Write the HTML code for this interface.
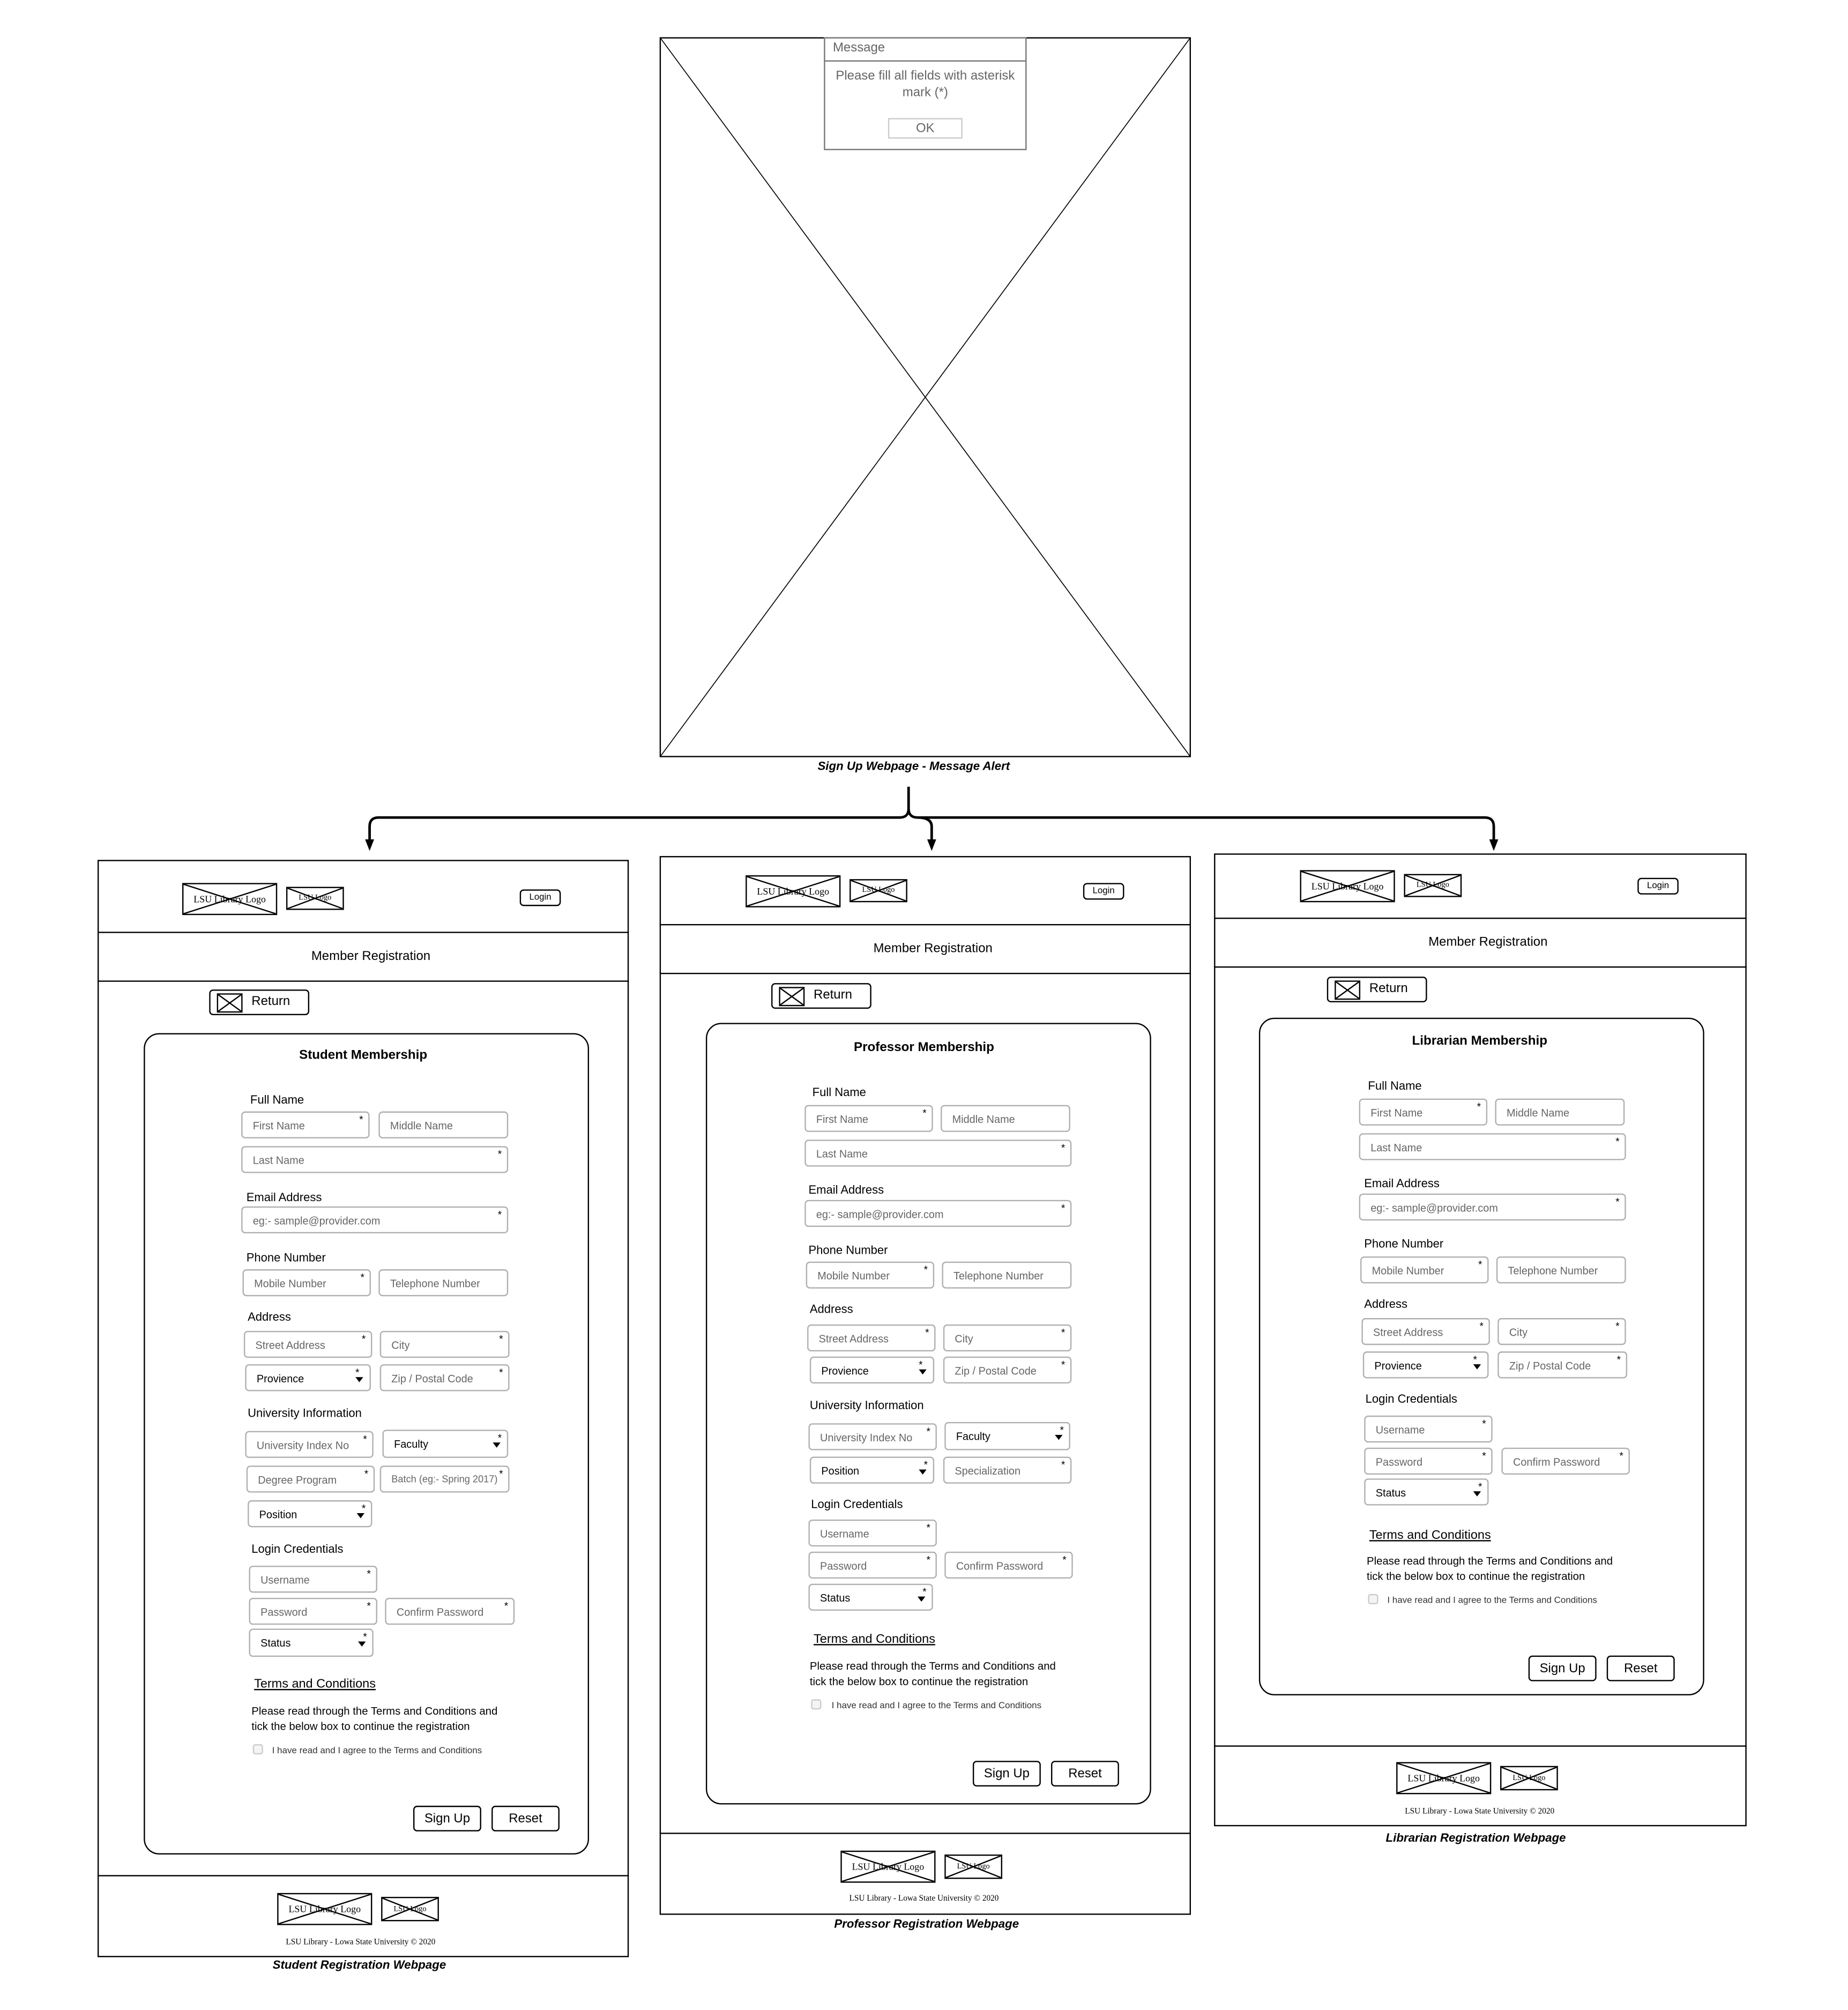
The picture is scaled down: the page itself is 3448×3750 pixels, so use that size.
<!DOCTYPE html>
<html><head><meta charset="utf-8"><style>
html,body{margin:0;padding:0;background:#fff;}
body{width:3448px;height:3750px;overflow:hidden;position:relative;}
#w{position:absolute;left:0;top:0;width:1440px;height:1566px;transform:scale(2.3944);transform-origin:0 0;font-family:"Liberation Sans",sans-serif;}
#w div{position:absolute;box-sizing:border-box;}
.bx{border:1px solid #000;}
.f{border:1px solid #b0b0b0;border-radius:3px;font-size:8.3px;color:#666;padding-left:8px;display:flex;align-items:center;white-space:nowrap;}
.f i{position:absolute;right:4px;top:1px;font-style:normal;color:#000;font-size:8px;}
.sel{color:#000;}
.sel b{position:absolute;right:5px;top:9px;width:0;height:0;border-left:3.5px solid transparent;border-right:3.5px solid transparent;border-top:4px solid #000;}
.lb{font-size:9.2px;color:#000;white-space:nowrap;}
.tt{font-size:10.1px;font-weight:bold;white-space:nowrap;transform:translateX(-50%);}
.cap{font-size:9.3px;font-weight:bold;font-style:italic;white-space:nowrap;transform:translateX(-50%);}
.btn{border:1px solid #000;border-radius:3px;font-size:10px;display:flex;align-items:center;justify-content:center;}
.lg{border:1px solid #000;}
.lg svg{position:absolute;left:0;top:0;width:100%;height:100%;}
.lg span{position:absolute;left:0;right:0;top:0;bottom:0;display:flex;align-items:center;justify-content:center;font-family:"Liberation Serif",serif;font-size:7.5px;white-space:nowrap;}
.lg.s span{font-size:6px;}
.lo{border:1px solid #000;border-radius:3px;font-size:7px;display:flex;align-items:center;justify-content:center;}
.nav{font-size:10px;display:flex;align-items:center;justify-content:center;border-bottom:1px solid #000;border-top:1px solid #000;padding-left:12px;}
.ret{border:1px solid #000;border-radius:3px;font-size:10px;}
.ret .ic{left:5px;top:2px;width:20px;height:15px;border:1px solid #000;}
.ret span{position:absolute;left:32px;top:3px;}
.card{border:1px solid #000;border-radius:12px;}
.ft{font-size:6.4px;white-space:nowrap;transform:translateX(-50%);font-family:"Liberation Serif",serif;}
.tc{font-size:9.8px;text-decoration:underline;white-space:nowrap;}
.p{font-size:8.5px;line-height:12px;white-space:nowrap;}
.cb{width:8px;height:8px;border:1px solid #ccc;border-radius:2px;background:#f4f4f4;}
.ct{font-size:7.1px;color:#333;white-space:nowrap;}
</style></head><body><div id="w">

<svg style="position:absolute;left:0;top:0" width="1440" height="1566">
<g stroke="#000" fill="none">
<rect x="514.5" y="29.5" width="413" height="560" stroke-width="1"/>
<path d="M514.5 29.5L927.5 589.5M927.5 29.5L514.5 589.5" stroke-width="0.7"/>
<path d="M708 613V630Q708 637 701 637H295Q288 637 288 644V658M708 630Q708 637 715 637H1157Q1164 637 1164 644V658M715 637Q726 637 726 644V658" stroke-width="2"/>
</g>
<g fill="#000"><path d="M284.5 654L288 663L291.5 654Z"/><path d="M722.5 654L726 663L729.5 654Z"/><path d="M1160.5 654L1164 663L1167.5 654Z"/></g>
</svg>

<div style="left:642px;top:29px;width:158px;height:88px;border:1px solid #777;background:#fff"></div>
<div style="left:642px;top:47px;width:158px;height:1px;background:#777"></div>
<div style="left:649px;top:32px;font-size:10px;color:#666">Message</div>
<div style="left:642px;top:53px;width:158px;text-align:center;font-size:10px;color:#666;line-height:13px">Please fill all fields with asterisk mark (*)</div>
<div style="left:692px;top:92px;width:58px;height:16px;border:1px solid #ccc;font-size:10px;color:#666;display:flex;align-items:center;justify-content:center">OK</div>
<div class="cap" style="left:712px;top:592px">Sign Up Webpage - Message Alert</div>

<!-- STUDENT -->
<div class="bx" style="left:76px;top:670px;width:414px;height:855px"></div>
<div class="lg" style="left:142px;top:688px;width:74px;height:25px"><svg viewBox="0 0 100 100" preserveAspectRatio="none"><path d="M0 0L100 100M100 0L0 100" stroke="#000" vector-effect="non-scaling-stroke"/></svg><span>LSU Library Logo</span></div>
<div class="lg s" style="left:223px;top:691px;width:45px;height:18px"><svg viewBox="0 0 100 100" preserveAspectRatio="none"><path d="M0 0L100 100M100 0L0 100" stroke="#000" vector-effect="non-scaling-stroke"/></svg><span>LSU Logo</span></div>
<div class="lo" style="left:405px;top:693px;width:32px;height:13px">Login</div>
<div class="nav" style="left:76px;top:726px;width:414px;height:39px">Member Registration</div>
<div class="ret" style="left:163px;top:771px;width:78px;height:20px"><div class="ic"><svg width="100%" height="100%" viewBox="0 0 100 100" preserveAspectRatio="none"><path d="M0 0L100 100M100 0L0 100" stroke="#000" vector-effect="non-scaling-stroke"/></svg></div><span>Return</span></div>
<div class="card" style="left:112px;top:805px;width:347px;height:640px"></div>
<div class="tt" style="left:283px;top:817px">Student Membership</div>
<div class="lb" style="left:195px;top:852px">Full Name</div>
<div class="f" style="left:188px;top:866px;width:100px;height:21px">First Name<i>*</i></div>
<div class="f" style="left:295px;top:866px;width:101px;height:21px">Middle Name</div>
<div class="f" style="left:188px;top:893px;width:208px;height:21px">Last Name<i>*</i></div>
<div class="lb" style="left:192px;top:928px">Email Address</div>
<div class="f" style="left:188px;top:940px;width:208px;height:21px">eg:- sample@provider.com<i>*</i></div>
<div class="lb" style="left:192px;top:975px">Phone Number</div>
<div class="f" style="left:189px;top:989px;width:100px;height:21px">Mobile Number<i>*</i></div>
<div class="f" style="left:295px;top:989px;width:101px;height:21px">Telephone Number</div>
<div class="lb" style="left:193px;top:1021px">Address</div>
<div class="f" style="left:190px;top:1037px;width:100px;height:21px">Street Address<i>*</i></div>
<div class="f" style="left:296px;top:1037px;width:101px;height:21px">City<i>*</i></div>
<div class="f sel" style="left:191px;top:1063px;width:98px;height:21px">Provience<i style="right:8px">*</i><b></b></div>
<div class="f" style="left:296px;top:1063px;width:101px;height:21px">Zip / Postal Code<i>*</i></div>
<div class="lb" style="left:193px;top:1096px">University Information</div>
<div class="f" style="left:191px;top:1115px;width:100px;height:21px">University Index No<i>*</i></div>
<div class="f sel" style="left:298px;top:1114px;width:98px;height:22px">Faculty<i>*</i><b></b></div>
<div class="f" style="left:192px;top:1142px;width:100px;height:21px">Degree Program<i>*</i></div>
<div class="f" style="left:296px;top:1142px;width:101px;height:21px;font-size:7.6px">Batch (eg:- Spring 2017)<i>*</i></div>
<div class="f sel" style="left:193px;top:1169px;width:97px;height:21px">Position<i>*</i><b></b></div>
<div class="lb" style="left:196px;top:1202px">Login Credentials</div>
<div class="f" style="left:194px;top:1220px;width:100px;height:21px">Username<i>*</i></div>
<div class="f" style="left:194px;top:1245px;width:100px;height:21px">Password<i>*</i></div>
<div class="f" style="left:300px;top:1245px;width:101px;height:21px">Confirm Password<i>*</i></div>
<div class="f sel" style="left:194px;top:1269px;width:97px;height:22px">Status<i>*</i><b></b></div>
<div class="tc" style="left:198px;top:1307px">Terms and Conditions</div>
<div class="p" style="left:196px;top:1327px">Please read through the Terms and Conditions and<br>tick the below box to continue the registration</div>
<div class="cb" style="left:197px;top:1359px"></div>
<div class="ct" style="left:212px;top:1360px">I have read and I agree to the Terms and Conditions</div>
<div class="btn" style="left:322px;top:1407px;width:53px;height:20px">Sign Up</div>
<div class="btn" style="left:383px;top:1407px;width:53px;height:20px">Reset</div>
<div style="left:76px;top:1461px;width:414px;height:1px;background:#000"></div>
<div class="lg" style="left:216px;top:1475px;width:74px;height:25px"><svg viewBox="0 0 100 100" preserveAspectRatio="none"><path d="M0 0L100 100M100 0L0 100" stroke="#000" vector-effect="non-scaling-stroke"/></svg><span>LSU Library Logo</span></div>
<div class="lg s" style="left:297px;top:1478px;width:45px;height:19px"><svg viewBox="0 0 100 100" preserveAspectRatio="none"><path d="M0 0L100 100M100 0L0 100" stroke="#000" vector-effect="non-scaling-stroke"/></svg><span>LSU Logo</span></div>
<div class="ft" style="left:281px;top:1510px">LSU Library - Lowa State University © 2020</div>
<div class="cap" style="left:280px;top:1526px">Student Registration Webpage</div>

<!-- PROFESSOR -->
<div class="bx" style="left:514px;top:667px;width:414px;height:825px"></div>
<div class="lg" style="left:581px;top:682px;width:74px;height:25px"><svg viewBox="0 0 100 100" preserveAspectRatio="none"><path d="M0 0L100 100M100 0L0 100" stroke="#000" vector-effect="non-scaling-stroke"/></svg><span>LSU Library Logo</span></div>
<div class="lg s" style="left:662px;top:685px;width:45px;height:18px"><svg viewBox="0 0 100 100" preserveAspectRatio="none"><path d="M0 0L100 100M100 0L0 100" stroke="#000" vector-effect="non-scaling-stroke"/></svg><span>LSU Logo</span></div>
<div class="lo" style="left:844px;top:688px;width:32px;height:13px">Login</div>
<div class="nav" style="left:514px;top:720px;width:414px;height:39px">Member Registration</div>
<div class="ret" style="left:601px;top:766px;width:78px;height:20px"><div class="ic"><svg width="100%" height="100%" viewBox="0 0 100 100" preserveAspectRatio="none"><path d="M0 0L100 100M100 0L0 100" stroke="#000" vector-effect="non-scaling-stroke"/></svg></div><span>Return</span></div>
<div class="card" style="left:550px;top:797px;width:347px;height:609px"></div>
<div class="tt" style="left:720px;top:811px">Professor Membership</div>
<div class="lb" style="left:633px;top:846px">Full Name</div>
<div class="f" style="left:627px;top:861px;width:100px;height:21px">First Name<i>*</i></div>
<div class="f" style="left:733px;top:861px;width:101px;height:21px">Middle Name</div>
<div class="f" style="left:627px;top:888px;width:208px;height:21px">Last Name<i>*</i></div>
<div class="lb" style="left:630px;top:922px">Email Address</div>
<div class="f" style="left:627px;top:935px;width:208px;height:21px">eg:- sample@provider.com<i>*</i></div>
<div class="lb" style="left:630px;top:969px">Phone Number</div>
<div class="f" style="left:628px;top:983px;width:100px;height:21px">Mobile Number<i>*</i></div>
<div class="f" style="left:734px;top:983px;width:101px;height:21px">Telephone Number</div>
<div class="lb" style="left:631px;top:1015px">Address</div>
<div class="f" style="left:629px;top:1032px;width:100px;height:21px">Street Address<i>*</i></div>
<div class="f" style="left:735px;top:1032px;width:100px;height:21px">City<i>*</i></div>
<div class="f sel" style="left:631px;top:1057px;width:97px;height:21px">Provience<i style="right:8px">*</i><b></b></div>
<div class="f" style="left:735px;top:1057px;width:100px;height:21px">Zip / Postal Code<i>*</i></div>
<div class="lb" style="left:631px;top:1090px">University Information</div>
<div class="f" style="left:630px;top:1109px;width:100px;height:21px">University Index No<i>*</i></div>
<div class="f sel" style="left:736px;top:1108px;width:98px;height:22px">Faculty<i>*</i><b></b></div>
<div class="f sel" style="left:631px;top:1135px;width:97px;height:21px">Position<i>*</i><b></b></div>
<div class="f" style="left:735px;top:1135px;width:100px;height:21px">Specialization<i>*</i></div>
<div class="lb" style="left:632px;top:1167px">Login Credentials</div>
<div class="f" style="left:630px;top:1184px;width:100px;height:21px">Username<i>*</i></div>
<div class="f" style="left:630px;top:1209px;width:100px;height:21px">Password<i>*</i></div>
<div class="f" style="left:736px;top:1209px;width:100px;height:21px">Confirm Password<i>*</i></div>
<div class="f sel" style="left:630px;top:1234px;width:97px;height:21px">Status<i>*</i><b></b></div>
<div class="tc" style="left:634px;top:1272px">Terms and Conditions</div>
<div class="p" style="left:631px;top:1292px">Please read through the Terms and Conditions and<br>tick the below box to continue the registration</div>
<div class="cb" style="left:632px;top:1324px"></div>
<div class="ct" style="left:648px;top:1325px">I have read and I agree to the Terms and Conditions</div>
<div class="btn" style="left:758px;top:1372px;width:53px;height:20px">Sign Up</div>
<div class="btn" style="left:819px;top:1372px;width:53px;height:20px">Reset</div>
<div style="left:514px;top:1428px;width:414px;height:1px;background:#000"></div>
<div class="lg" style="left:655px;top:1442px;width:74px;height:25px"><svg viewBox="0 0 100 100" preserveAspectRatio="none"><path d="M0 0L100 100M100 0L0 100" stroke="#000" vector-effect="non-scaling-stroke"/></svg><span>LSU Library Logo</span></div>
<div class="lg s" style="left:736px;top:1445px;width:45px;height:19px"><svg viewBox="0 0 100 100" preserveAspectRatio="none"><path d="M0 0L100 100M100 0L0 100" stroke="#000" vector-effect="non-scaling-stroke"/></svg><span>LSU Logo</span></div>
<div class="ft" style="left:720px;top:1476px">LSU Library - Lowa State University © 2020</div>
<div class="cap" style="left:722px;top:1494px">Professor Registration Webpage</div>

<!-- LIBRARIAN -->
<div class="bx" style="left:946px;top:665px;width:415px;height:758px"></div>
<div class="lg" style="left:1013px;top:678px;width:74px;height:25px"><svg viewBox="0 0 100 100" preserveAspectRatio="none"><path d="M0 0L100 100M100 0L0 100" stroke="#000" vector-effect="non-scaling-stroke"/></svg><span>LSU Library Logo</span></div>
<div class="lg s" style="left:1094px;top:681px;width:45px;height:18px"><svg viewBox="0 0 100 100" preserveAspectRatio="none"><path d="M0 0L100 100M100 0L0 100" stroke="#000" vector-effect="non-scaling-stroke"/></svg><span>LSU Logo</span></div>
<div class="lo" style="left:1276px;top:684px;width:32px;height:13px">Login</div>
<div class="nav" style="left:946px;top:715px;width:415px;height:39px">Member Registration</div>
<div class="ret" style="left:1034px;top:761px;width:78px;height:20px"><div class="ic"><svg width="100%" height="100%" viewBox="0 0 100 100" preserveAspectRatio="none"><path d="M0 0L100 100M100 0L0 100" stroke="#000" vector-effect="non-scaling-stroke"/></svg></div><span>Return</span></div>
<div class="card" style="left:981px;top:793px;width:347px;height:528px"></div>
<div class="tt" style="left:1153px;top:806px">Librarian Membership</div>
<div class="lb" style="left:1066px;top:841px">Full Name</div>
<div class="f" style="left:1059px;top:856px;width:100px;height:21px">First Name<i>*</i></div>
<div class="f" style="left:1165px;top:856px;width:101px;height:21px">Middle Name</div>
<div class="f" style="left:1059px;top:883px;width:208px;height:21px">Last Name<i>*</i></div>
<div class="lb" style="left:1063px;top:917px">Email Address</div>
<div class="f" style="left:1059px;top:930px;width:208px;height:21px">eg:- sample@provider.com<i>*</i></div>
<div class="lb" style="left:1063px;top:964px">Phone Number</div>
<div class="f" style="left:1060px;top:979px;width:100px;height:21px">Mobile Number<i>*</i></div>
<div class="f" style="left:1166px;top:979px;width:101px;height:21px">Telephone Number</div>
<div class="lb" style="left:1063px;top:1011px">Address</div>
<div class="f" style="left:1061px;top:1027px;width:100px;height:21px">Street Address<i>*</i></div>
<div class="f" style="left:1167px;top:1027px;width:100px;height:21px">City<i>*</i></div>
<div class="f sel" style="left:1062px;top:1053px;width:98px;height:21px">Provience<i style="right:8px">*</i><b></b></div>
<div class="f" style="left:1167px;top:1053px;width:101px;height:21px">Zip / Postal Code<i>*</i></div>
<div class="lb" style="left:1064px;top:1085px">Login Credentials</div>
<div class="f" style="left:1063px;top:1103px;width:100px;height:21px">Username<i>*</i></div>
<div class="f" style="left:1063px;top:1128px;width:100px;height:21px">Password<i>*</i></div>
<div class="f" style="left:1170px;top:1128px;width:100px;height:21px">Confirm Password<i>*</i></div>
<div class="f sel" style="left:1063px;top:1152px;width:97px;height:21px">Status<i>*</i><b></b></div>
<div class="tc" style="left:1067px;top:1191px">Terms and Conditions</div>
<div class="p" style="left:1065px;top:1210px">Please read through the Terms and Conditions and<br>tick the below box to continue the registration</div>
<div class="cb" style="left:1066px;top:1242px"></div>
<div class="ct" style="left:1081px;top:1243px">I have read and I agree to the Terms and Conditions</div>
<div class="btn" style="left:1191px;top:1290px;width:53px;height:20px">Sign Up</div>
<div class="btn" style="left:1252px;top:1290px;width:53px;height:20px">Reset</div>
<div style="left:946px;top:1360px;width:415px;height:1px;background:#000"></div>
<div class="lg" style="left:1088px;top:1373px;width:74px;height:25px"><svg viewBox="0 0 100 100" preserveAspectRatio="none"><path d="M0 0L100 100M100 0L0 100" stroke="#000" vector-effect="non-scaling-stroke"/></svg><span>LSU Library Logo</span></div>
<div class="lg s" style="left:1169px;top:1376px;width:45px;height:19px"><svg viewBox="0 0 100 100" preserveAspectRatio="none"><path d="M0 0L100 100M100 0L0 100" stroke="#000" vector-effect="non-scaling-stroke"/></svg><span>LSU Logo</span></div>
<div class="ft" style="left:1153px;top:1408px">LSU Library - Lowa State University © 2020</div>
<div class="cap" style="left:1150px;top:1427px">Librarian Registration Webpage</div>

</div></body></html>
